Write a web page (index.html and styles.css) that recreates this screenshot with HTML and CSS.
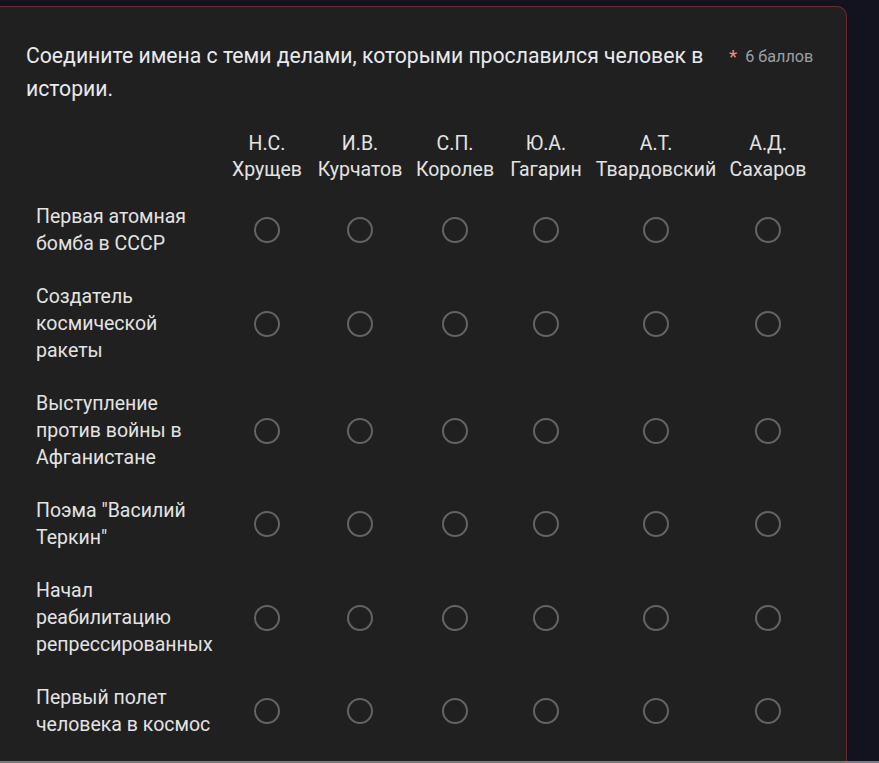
FILE: index.html
```html
<!DOCTYPE html>
<html lang="ru">
<head>
<meta charset="utf-8">
<title>Вопрос</title>
<link rel="stylesheet" href="styles.css">
</head>
<body>
<div class="viewport">
  <div class="card">
    <div class="title-row">
      <div class="title">Соедините имена с теми делами, которыми прославился человек в истории.</div>
      <div class="meta"><span class="req">*</span><span class="points">6 баллов</span></div>
    </div>
    <table class="grid">
      <colgroup>
        <col class="c-label">
        <col class="c1"><col class="c2"><col class="c3"><col class="c4"><col class="c5"><col class="c6">
      </colgroup>
      <thead>
        <tr>
          <th></th>
          <th>Н.С.<br>Хрущев</th>
          <th>И.В.<br>Курчатов</th>
          <th>С.П.<br>Королев</th>
          <th>Ю.А.<br>Гагарин</th>
          <th>А.Т.<br>Твардовский</th>
          <th>А.Д.<br>Сахаров</th>
        </tr>
      </thead>
      <tbody>
        <tr>
          <td class="label">Первая атомная<br>бомба в СССР</td>
          <td><span class="radio"></span></td><td><span class="radio"></span></td><td><span class="radio"></span></td><td><span class="radio"></span></td><td><span class="radio"></span></td><td><span class="radio"></span></td>
        </tr>
        <tr>
          <td class="label">Создатель<br>космической<br>ракеты</td>
          <td><span class="radio"></span></td><td><span class="radio"></span></td><td><span class="radio"></span></td><td><span class="radio"></span></td><td><span class="radio"></span></td><td><span class="radio"></span></td>
        </tr>
        <tr>
          <td class="label">Выступление<br>против войны в<br>Афганистане</td>
          <td><span class="radio"></span></td><td><span class="radio"></span></td><td><span class="radio"></span></td><td><span class="radio"></span></td><td><span class="radio"></span></td><td><span class="radio"></span></td>
        </tr>
        <tr>
          <td class="label">Поэма "Василий<br>Теркин"</td>
          <td><span class="radio"></span></td><td><span class="radio"></span></td><td><span class="radio"></span></td><td><span class="radio"></span></td><td><span class="radio"></span></td><td><span class="radio"></span></td>
        </tr>
        <tr>
          <td class="label">Начал<br>реабилитацию<br>репрессированных</td>
          <td><span class="radio"></span></td><td><span class="radio"></span></td><td><span class="radio"></span></td><td><span class="radio"></span></td><td><span class="radio"></span></td><td><span class="radio"></span></td>
        </tr>
        <tr>
          <td class="label">Первый полет<br>человека в космос</td>
          <td><span class="radio"></span></td><td><span class="radio"></span></td><td><span class="radio"></span></td><td><span class="radio"></span></td><td><span class="radio"></span></td><td><span class="radio"></span></td>
        </tr>
      </tbody>
    </table>
  </div>
</div>
<div class="bottom-bar"></div>
</body>
</html>
```

FILE: styles.css
```css
html, body {
  margin: 0;
  padding: 0;
  background: #13121f;
  font-family: Roboto, "Noto Sans", "Liberation Sans", sans-serif;
  color: #e3e3e3;
}

.viewport {
  height: 761px;
  overflow: hidden;
  padding-top: 6px;
  box-sizing: border-box;
}

.bottom-bar {
  height: 2px;
  background: #7c7c7c;
}

.card {
  width: 847px;
  box-sizing: border-box;
  background: #202020;
  border: 1px solid #6a2c33;
  border-left: none;
  border-top-right-radius: 10px;
  padding: 32px 30px 40px 26px;
  min-height: 900px;
}

.title-row {
  display: flex;
  align-items: flex-start;
}

.title {
  width: 700px;
  flex: none;
  font-size: 21.2px;
  line-height: 33px;
  color: #e8eaed;
}

.meta {
  margin-left: 3px;
  margin-top: 1px;
  display: flex;
  align-items: center;
  gap: 8px;
  white-space: nowrap;
  line-height: 33px;
}

.req {
  color: #f28b82;
  font-size: 19px;
}

.points {
  color: #9aa0a6;
  font-size: 16.2px;
}

.grid {
  margin-top: 26px;
  border-collapse: collapse;
  table-layout: fixed;
  width: 790px;
  font-size: 19.5px;
}

.c-label { width: 198px; }
.c1 { width: 86px; }
.c2 { width: 100px; }
.c3 { width: 90px; }
.c4 { width: 92px; }
.c5 { width: 128px; }
.c6 { width: 96px; }

.grid th {
  font-weight: 400;
  line-height: 26px;
  text-align: center;
  padding: 0 0 7px;
  color: #e3e3e3;
  white-space: nowrap;
}

.grid td {
  padding: 0;
  text-align: center;
  vertical-align: middle;
}

.grid td.label {
  text-align: left;
  padding: 13px 0 13px 10px;
  line-height: 27px;
  white-space: nowrap;
}

.radio {
  display: inline-block;
  width: 22px;
  height: 22px;
  border: 2px solid #646464;
  border-radius: 50%;
  vertical-align: middle;
}
```
